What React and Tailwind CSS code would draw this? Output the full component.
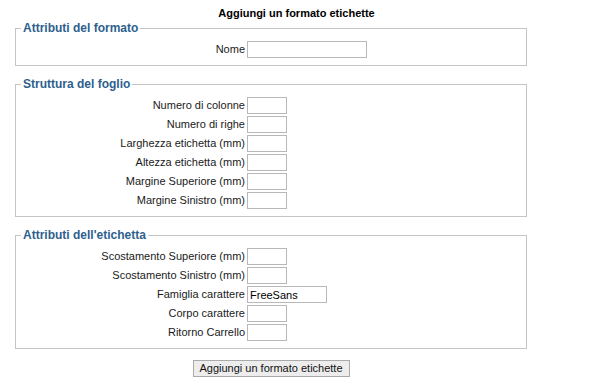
import React from 'react';

const sections = [
  {
    legend: 'Attributi del formato',
    rows: [{ label: 'Nome', width: 'w-[120px]' }]
  },
  {
    legend: 'Struttura del foglio',
    rows: [
      { label: 'Numero di colonne' },
      { label: 'Numero di righe' },
      { label: 'Larghezza etichetta (mm)' },
      { label: 'Altezza etichetta (mm)' },
      { label: 'Margine Superiore (mm)' },
      { label: 'Margine Sinistro (mm)' }
    ]
  },
  {
    legend: "Attributi dell'etichetta",
    rows: [
      { label: 'Scostamento Superiore (mm)' },
      { label: 'Scostamento Sinistro (mm)' },
      { label: 'Famiglia carattere', width: 'w-[80px]', value: 'FreeSans' },
      { label: 'Corpo carattere' },
      { label: 'Ritorno Carrello' }
    ]
  }
];

function Section({ legend, rows }) {
  return (
    <fieldset className="border border-[#c4c4c4] pt-[6px] pb-[7px]">
      <legend className="ml-[5px] px-[2px] text-[12px] leading-[14px] font-bold text-[#2e5f8e]">
        {legend}
      </legend>
      <div className="grid grid-cols-[229px_auto] gap-x-[2px] gap-y-[2px] items-center">
        {rows.map((row) => (
          <React.Fragment key={row.label}>
            <label className="text-right text-[11px] leading-[17px] text-[#1a1a1a]">{row.label}</label>
            <input
              type="text"
              defaultValue={row.value || ''}
              className={`${row.width || 'w-[40px]'} h-[17px] border border-[#b8b8b8] bg-white px-[2px] text-[11px] text-black outline-none`}
            />
          </React.Fragment>
        ))}
      </div>
    </fieldset>
  );
}

export default function App() {
  return (
    <div className="w-[593px] h-[391px] bg-white pt-[6px] font-['Liberation_Sans',Arial,sans-serif]">
      <h1 className="text-center text-[11px] leading-[14px] font-bold text-black">
        Aggiungi un formato etichette
      </h1>
      <div className="ml-[15px] w-[512px] flex flex-col gap-[11px] mt-[1px]">
        {sections.map((s) => (
          <Section key={s.legend} legend={s.legend} rows={s.rows} />
        ))}
        <div className="flex justify-center">
          <button className="h-[17px] w-[157px] border border-[#aaaaaa] bg-[#ededed] text-[11px] leading-[15px] text-[#111]">
            Aggiungi un formato etichette
          </button>
        </div>
      </div>
    </div>
  );
}
